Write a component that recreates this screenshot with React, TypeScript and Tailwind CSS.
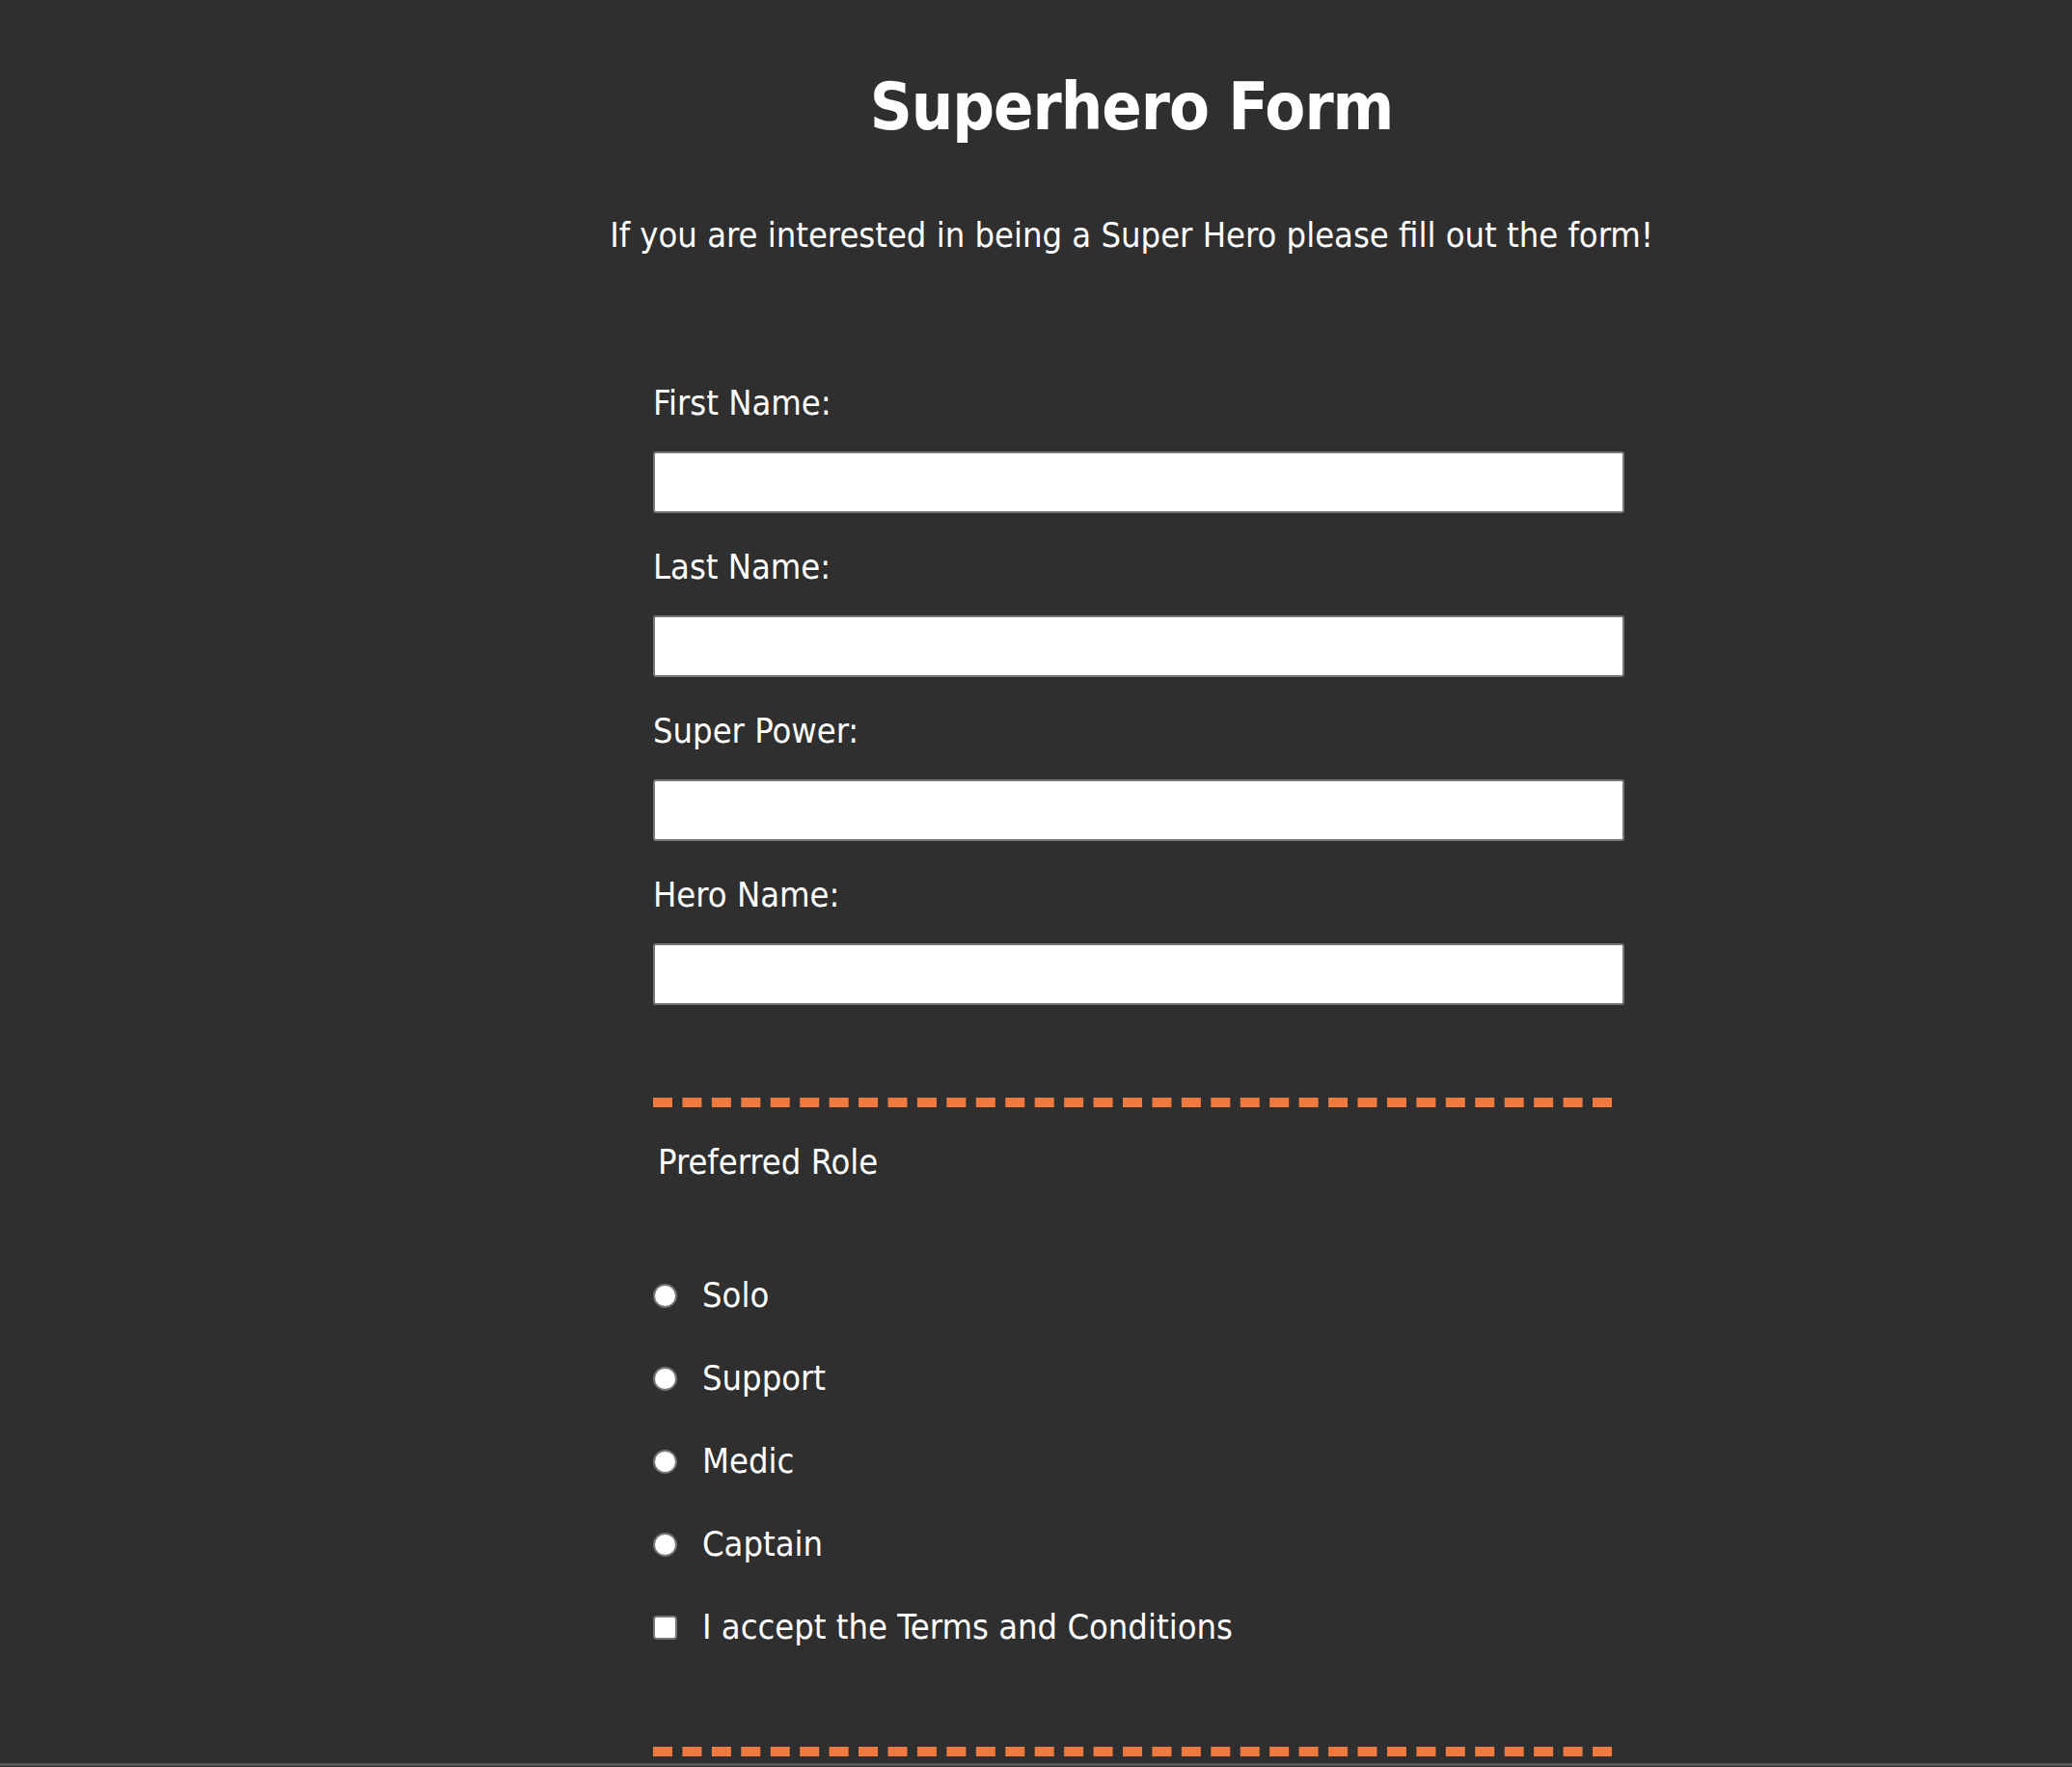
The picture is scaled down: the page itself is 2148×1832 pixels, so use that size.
import React from 'react'

const fields = ['First Name:', 'Last Name:', 'Super Power:', 'Hero Name:']
const roles = ['Solo', 'Support', 'Medic', 'Captain']

export default function App() {
  return (
    <div className="min-h-screen bg-[#2f2f2f] text-white font-['DejaVu_Sans_Condensed','DejaVu_Sans',sans-serif]">
      <header className="pl-[198px] pt-[68px] text-center">
        <h1 className="text-[68px] leading-[86px] font-bold tracking-[-1px]">Superhero Form</h1>
        <p className="mt-[70px] text-[36px] leading-[40px]">
          If you are interested in being a Super Hero please fill out the form!
        </p>
      </header>

      <form className="ml-[677px] w-[1007px] mt-[134px]">
        {fields.map((label) => (
          <div key={label} className="pb-[36px]">
            <label className="block text-[36px] leading-[40px]">{label}</label>
            <input
              type="text"
              className="mt-[30px] block w-full h-[64px] bg-white border-2 border-[#767676] rounded-[3px] text-black"
            />
          </div>
        ))}

        <div className="mt-[60px] w-[994px] border-t-[10px] border-dashed border-[#ef7a40]" />

        <div role="radiogroup" className="pt-[36px]">
          <p className="pl-[5px] text-[36px] leading-[42px]">Preferred Role</p>

          <div className="mt-[97px] flex flex-col gap-[46px]">
            {roles.map((role) => (
              <label key={role} className="flex items-center h-[40px] text-[36px] leading-[40px]">
                <input
                  type="radio"
                  name="role"
                  className="appearance-none w-[25px] h-[25px] rounded-full bg-white border-2 border-[#767676] shrink-0"
                />
                <span className="ml-[26px]">{role}</span>
              </label>
            ))}
            <label className="flex items-center h-[40px] text-[36px] leading-[40px]">
              <input
                type="checkbox"
                className="appearance-none w-[25px] h-[25px] rounded-[4px] bg-white border-2 border-[#767676] shrink-0"
              />
              <span className="ml-[26px]">I accept the Terms and Conditions</span>
            </label>
          </div>
        </div>

        <div className="mt-[104px] w-[994px] border-t-[10px] border-dashed border-[#ef7a40]" />
      </form>

      <div className="mt-[7px] h-[40px] border-t-[3px] border-[#575757]" />
    </div>
  )
}
